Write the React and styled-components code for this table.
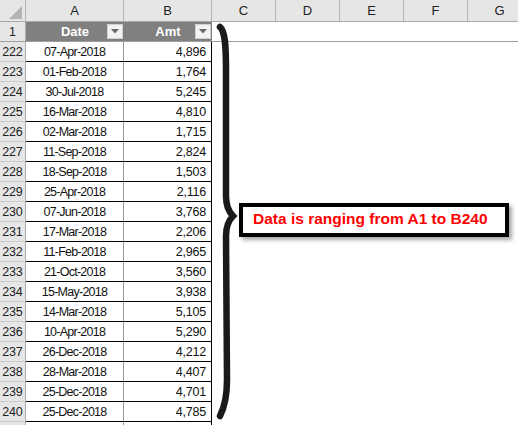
import React from 'react';
import styled, { createGlobalStyle } from 'styled-components';

const GlobalStyle = createGlobalStyle`
  html, body {
    margin: 0;
    padding: 0;
    background: #ffffff;
  }
`;

const rows = [
  [222, '07-Apr-2018', '4,896'],
  [223, '01-Feb-2018', '1,764'],
  [224, '30-Jul-2018', '5,245'],
  [225, '16-Mar-2018', '4,810'],
  [226, '02-Mar-2018', '1,715'],
  [227, '11-Sep-2018', '2,824'],
  [228, '18-Sep-2018', '1,503'],
  [229, '25-Apr-2018', '2,116'],
  [230, '07-Jun-2018', '3,768'],
  [231, '17-Mar-2018', '2,206'],
  [232, '11-Feb-2018', '2,965'],
  [233, '21-Oct-2018', '3,560'],
  [234, '15-May-2018', '3,938'],
  [235, '14-Mar-2018', '5,105'],
  [236, '10-Apr-2018', '5,290'],
  [237, '26-Dec-2018', '4,212'],
  [238, '28-Mar-2018', '4,407'],
  [239, '25-Dec-2018', '4,701'],
  [240, '25-Dec-2018', '4,785'],
  ['', '', ''],
];

const columns = [
  { label: 'A', width: 98 },
  { label: 'B', width: 88 },
  { label: 'C', width: 64 },
  { label: 'D', width: 64 },
  { label: 'E', width: 64 },
  { label: 'F', width: 64 },
  { label: 'G', width: 64 },
];

const Sheet = styled.div`
  position: relative;
  width: 518px;
  height: 425px;
  overflow: hidden;
  background: #ffffff;
  font-family: "Liberation Sans", Arial, sans-serif;
  color: #111111;
`;

const ColumnBar = styled.div`
  display: flex;
  height: 22px;
  box-sizing: border-box;
  background: #e6e6e6;
  border-bottom: 1px solid #a9a9a9;
`;

const Corner = styled.div`
  width: 26px;
  flex: none;
  box-sizing: border-box;
  border-right: 1px solid #b5b5b5;
  display: flex;
  align-items: flex-end;
  justify-content: flex-end;
  padding: 0 3px 2px 0;
`;

const ColumnHead = styled.div`
  width: ${(p) => p.$width}px;
  flex: none;
  box-sizing: border-box;
  border-right: 1px solid #b5b5b5;
  display: flex;
  align-items: center;
  justify-content: center;
  font-size: 13px;
  color: #222222;
`;

const FrozenRow = styled.div`
  display: flex;
  height: 20px;
  box-sizing: border-box;
  border-bottom: 1px solid #9f9f9f;
`;

const Row = styled.div`
  display: flex;
  height: 20px;
`;

const RowNum = styled.div`
  width: 26px;
  flex: none;
  box-sizing: border-box;
  background: #e6e6e6;
  border-right: 1px solid #ababab;
  border-bottom: ${(p) => (p.$frozen ? 'none' : '1px solid #cbcbcb')};
  display: flex;
  align-items: center;
  justify-content: center;
  font-size: 12.5px;
  letter-spacing: -0.2px;
  color: #222222;
`;

const TitleCell = styled.div`
  width: ${(p) => p.$width}px;
  flex: none;
  background: #808080;
  display: grid;
  grid-template-columns: 17px 1fr 17px;
  align-items: center;
`;

const TitleText = styled.span`
  grid-column: 2;
  text-align: center;
  color: #ffffff;
  font-weight: bold;
  font-size: 13px;
`;

const FilterButton = styled.div`
  grid-column: 3;
  justify-self: end;
  margin-right: 1px;
  width: 16px;
  height: 15px;
  box-sizing: border-box;
  background: #f2f2f2;
  border: 1px solid #cfcfcf;
  display: flex;
  align-items: center;
  justify-content: center;
`;

const DateCell = styled.div`
  width: 98px;
  flex: none;
  box-sizing: border-box;
  border-right: 1px solid #9a9a9a;
  border-bottom: 1px solid #000000;
  display: flex;
  align-items: center;
  justify-content: center;
  font-size: 12.5px;
  letter-spacing: -0.75px;
`;

const AmtCell = styled.div`
  width: 88px;
  flex: none;
  box-sizing: border-box;
  border-right: 1px solid #000000;
  border-bottom: 1px solid #000000;
  display: flex;
  align-items: center;
  justify-content: flex-end;
  padding-right: 5px;
  font-size: 12.5px;
  letter-spacing: -0.2px;
`;

const Brace = styled.svg`
  position: absolute;
  left: 0;
  top: 0;
  pointer-events: none;
`;

const Callout = styled.div`
  position: absolute;
  left: 239px;
  top: 203px;
  width: 270px;
  height: 34px;
  box-sizing: border-box;
  border: 4px solid #000000;
  background: #ffffff;
  box-shadow: 3px 3px 4px rgba(0, 0, 0, 0.35);
  display: flex;
  align-items: center;
  padding: 0 0 3px 10px;
  color: #ff0000;
  font-weight: bold;
  font-size: 15.5px;
  white-space: nowrap;
`;

const FilterIcon = () => (
  <svg width="8" height="5" viewBox="0 0 8 5">
    <polygon points="0,0 8,0 4,4.5" fill="#6a6a6a" />
  </svg>
);

const App = () => (
  <>
    <GlobalStyle />
    <Sheet>
      <ColumnBar>
        <Corner>
          <svg width="13" height="13" viewBox="0 0 13 13">
            <polygon points="13,0 13,13 0,13" fill="#b4b4b4" />
          </svg>
        </Corner>
        {columns.map((c) => (
          <ColumnHead key={c.label} $width={c.width}>
            {c.label}
          </ColumnHead>
        ))}
      </ColumnBar>

      <FrozenRow>
        <RowNum $frozen>1</RowNum>
        <TitleCell $width={98}>
          <TitleText>Date</TitleText>
          <FilterButton>
            <FilterIcon />
          </FilterButton>
        </TitleCell>
        <TitleCell $width={88}>
          <TitleText>Amt</TitleText>
          <FilterButton>
            <FilterIcon />
          </FilterButton>
        </TitleCell>
      </FrozenRow>

      {rows.map(([n, date, amt], i) => (
        <Row key={i}>
          <RowNum>{n}</RowNum>
          <DateCell>{date}</DateCell>
          <AmtCell>{amt}</AmtCell>
        </Row>
      ))}

      <Brace width="518" height="425" viewBox="0 0 518 425">
        <path
          d="M220 27 C225 31 226 45 226 70 L226 196 C226 207 229 212 233 216 C229 220 226 225 226 236 L227 380 C227 398 224 408 220 416"
          fill="none"
          stroke="#1a1a1a"
          strokeWidth="6.5"
          strokeLinecap="round"
        />
      </Brace>

      <Callout>Data is ranging from A1 to B240</Callout>
    </Sheet>
  </>
);

export default App;
